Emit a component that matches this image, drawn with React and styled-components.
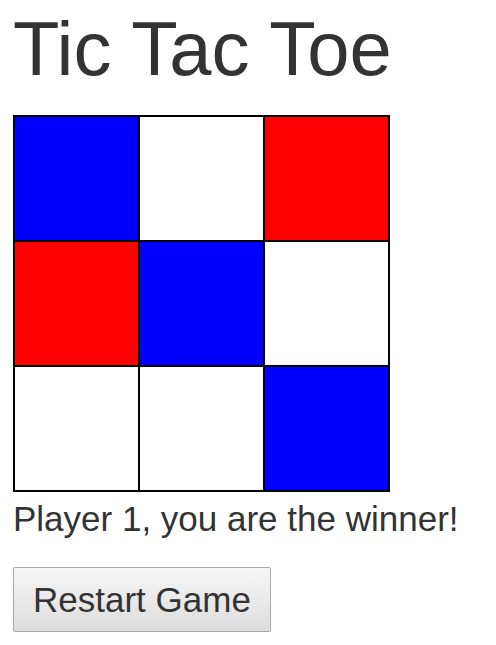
import React, { useState } from 'react'
import styled, { createGlobalStyle } from 'styled-components'

const GlobalStyle = createGlobalStyle`
  body {
    margin: 0;
    background: #fff;
    color: #333;
    font-family: "Liberation Sans", Arial, sans-serif;
  }
`

const Page = styled.div`
  padding: 0 13px;
`

const Title = styled.h1`
  font-size: 76px;
  font-weight: 400;
  line-height: 1;
  margin: 11px 0 28px;
`

const Board = styled.div`
  display: grid;
  grid-template-columns: repeat(3, 125px);
  grid-template-rows: repeat(3, 125px);
  width: 375px;
  border: 1px solid #000;
`

const Cell = styled.div`
  border: 1px solid #000;
  background: ${({ owner }) =>
    owner === 1 ? '#0000ff' : owner === 2 ? '#ff0000' : '#fff'};
`

const Status = styled.p`
  font-size: 35px;
  line-height: 1.2;
  margin: 6px 0 27px;
`

const Button = styled.button`
  font-family: inherit;
  font-size: 35px;
  color: #333;
  height: 65px;
  padding: 0 19px;
  border: 1px solid #aaa;
  border-radius: 2px;
  background: linear-gradient(#f6f6f6, #dddddd);
  cursor: pointer;
`

const initial = [1, 0, 2, 2, 1, 0, 0, 0, 1]

export default function App() {
  const [cells, setCells] = useState(initial)
  return (
    <Page>
      <GlobalStyle />
      <Title>Tic Tac Toe</Title>
      <Board>
        {cells.map((owner, i) => (
          <Cell key={i} owner={owner} />
        ))}
      </Board>
      <Status>Player 1, you are the winner!</Status>
      <Button onClick={() => setCells(Array(9).fill(0))}>Restart Game</Button>
    </Page>
  )
}
